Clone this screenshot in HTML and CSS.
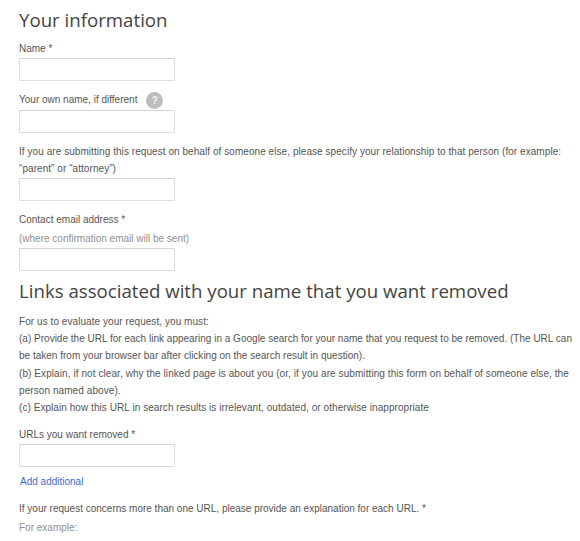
FILE: index.html
```
<!DOCTYPE html>
<html lang="en">
<head>
<meta charset="utf-8">
<title>Your information</title>
<link rel="stylesheet" href="styles.css">
</head>
<body>
<main class="form">
  <h2 class="heading">Your information</h2>
  <div class="field first">
    <label class="label">Name *</label>
    <input class="input" type="text">
  </div>
  <div class="field">
    <label class="label">Your own name, if different <span class="help">?</span></label>
    <input class="input" type="text">
  </div>
  <div class="field">
    <label class="label wide">If you are submitting this request on behalf of someone else, please specify your relationship to that person (for example: “parent” or “attorney”)</label>
    <input class="input" type="text">
  </div>
  <div class="field">
    <label class="label">Contact email address *</label>
    <div class="hint">(where confirmation email will be sent)</div>
    <input class="input" type="text">
  </div>
  <h2 class="heading second">Links associated with your name that you want removed</h2>
  <p class="text"><span class="wide">For us to evaluate your request, you must:</span><br>
  <span class="slight">(a) Provide the URL for each link appearing in a Google search for your name that you request to be removed. (The URL can be taken from your browser bar after clicking on the search result in question).</span><br>
  <span class="wider">(b) Explain, if not clear, why the linked page is about you (or, if you are submitting this form on behalf of someone else, the person named above).</span><br>
  <span class="wide">(c) Explain how this URL in search results is irrelevant, outdated, or otherwise inappropriate</span></p>
  <div class="field urls">
    <label class="label">URLs you want removed *</label>
    <input class="input" type="text">
  </div>
  <a class="add" href="#">Add additional</a>
  <div class="label explain">If your request concerns more than one URL, please provide an explanation for each URL. *</div>
  <div class="hint">For example:</div>
</main>
</body>
</html>
```
FILE: styles.css
```
html, body {
  margin: 0;
  padding: 0;
  background: #fff;
  overflow: hidden;
}
.form {
  width: 557px;
  margin-left: 19px;
  font-family: "Liberation Sans", Arial, sans-serif;
  font-size: 10px;
  line-height: 17.3px;
  color: #555;
}
.heading {
  margin: 0;
  padding-top: 6px;
  font-family: "Open Sans", sans-serif;
  font-size: 18.67px;
  font-weight: 400;
  line-height: 27px;
  color: #444;
}
.field { margin-top: 10px; }
.field.first { margin-top: 7px; }
.field.urls { margin-top: 9px; }
.label { display: block; }
.wide { letter-spacing: 0.06px; }
.wider { letter-spacing: 0.08px; }
.slight { letter-spacing: 0.01px; }
.hint { color: #8f8f8f; margin-top: 1.7px; }
.input {
  display: block;
  box-sizing: border-box;
  width: 156px;
  height: 23px;
  margin: 1px 0 0;
  padding: 0 4px;
  border: 1px solid #ddd;
  border-top-color: #d4d4d4;
  border-radius: 1px;
  background: #fff;
}
.help {
  display: inline-block;
  width: 17px;
  height: 17px;
  margin: -3px 0 -3px 6px;
  vertical-align: middle;
  border-radius: 50%;
  background: #bdbdbd;
  color: #f2f2f2;
  font-weight: 700;
  font-size: 10px;
  line-height: 17px;
  text-align: center;
}
.text { margin: 8.3px 0 0; }
.add {
  display: block;
  margin-top: 6.5px;
  padding-left: 1px;
  color: #3b6bd6;
  text-decoration: none;
}
.explain { margin-top: 9.6px; }
```
